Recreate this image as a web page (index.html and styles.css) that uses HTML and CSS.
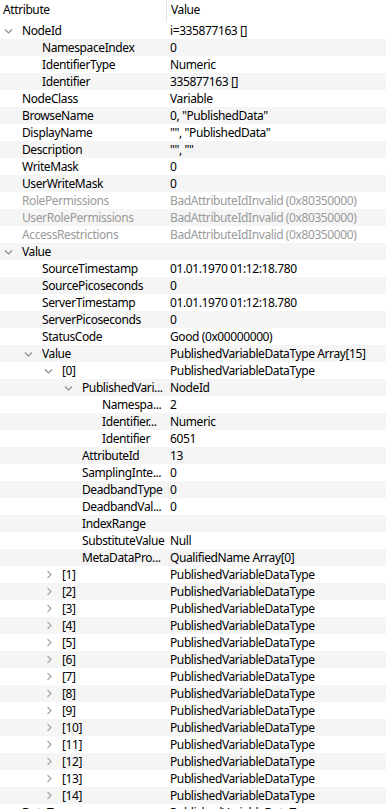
FILE: index.html
```html
<!DOCTYPE html>
<html lang="en">
<head>
  <meta charset="UTF-8" />
  <meta name="viewport" content="width=device-width, initial-scale=1" />
  <title>Attributes</title>
  <link rel="stylesheet" href="styles.css">
</head>
<body>
  <div class="attr-view">
    <div class="head">
      <div class="col-name">Attribute</div>
      <div class="col-value">Value</div>
    </div>
    <div id="rows"></div>
  </div>

  <script>
    // [level, toggle ('open' | 'closed' | ''), name, value, disabled]
    const rows = [
      [0, 'open', 'NodeId', 'i=335877163 []'],
      [1, '', 'NamespaceIndex', '0'],
      [1, '', 'IdentifierType', 'Numeric'],
      [1, '', 'Identifier', '335877163 []'],
      [0, '', 'NodeClass', 'Variable'],
      [0, '', 'BrowseName', '0, "PublishedData"'],
      [0, '', 'DisplayName', '"", "PublishedData"'],
      [0, '', 'Description', '"", ""'],
      [0, '', 'WriteMask', '0'],
      [0, '', 'UserWriteMask', '0'],
      [0, '', 'RolePermissions', 'BadAttributeIdInvalid (0x80350000)', true],
      [0, '', 'UserRolePermissions', 'BadAttributeIdInvalid (0x80350000)', true],
      [0, '', 'AccessRestrictions', 'BadAttributeIdInvalid (0x80350000)', true],
      [0, 'open', 'Value', ''],
      [1, '', 'SourceTimestamp', '01.01.1970 01:12:18.780'],
      [1, '', 'SourcePicoseconds', '0'],
      [1, '', 'ServerTimestamp', '01.01.1970 01:12:18.780'],
      [1, '', 'ServerPicoseconds', '0'],
      [1, '', 'StatusCode', 'Good (0x00000000)'],
      [1, 'open', 'Value', 'PublishedVariableDataType Array[15]'],
      [2, 'open', '[0]', 'PublishedVariableDataType'],
      [3, 'open', 'PublishedVari...', 'NodeId'],
      [4, '', 'Namespa...', '2'],
      [4, '', 'Identifier...', 'Numeric'],
      [4, '', 'Identifier', '6051'],
      [3, '', 'AttributeId', '13'],
      [3, '', 'SamplingInte...', '0'],
      [3, '', 'DeadbandType', '0'],
      [3, '', 'DeadbandVal...', '0'],
      [3, '', 'IndexRange', ''],
      [3, '', 'SubstituteValue', 'Null'],
      [3, '', 'MetaDataPro...', 'QualifiedName Array[0]']
    ];
    for (let i = 1; i <= 14; i++) {
      rows.push([2, 'closed', '[' + i + ']', 'PublishedVariableDataType']);
    }
    rows.push([0, '', 'DataType', 'PublishedVariableDataType']);

    const down = '<svg width="9" height="6" viewBox="0 0 9 6"><path d="M1 1.5 L4.5 5 L8 1.5" fill="none" stroke="#8c8c8c" stroke-width="1.2"/></svg>';
    const right = '<svg width="6" height="9" viewBox="0 0 6 9"><path d="M1.5 1 L5 4.5 L1.5 8" fill="none" stroke="#a6a6a6" stroke-width="1.2"/></svg>';

    const list = document.getElementById('rows');
    rows.forEach(([level, toggle, name, value, disabled]) => {
      const row = document.createElement('div');
      row.className = 'row' + (disabled ? ' disabled' : '');
      const icon = toggle === 'open' ? down : toggle === 'closed' ? right : '';
      row.innerHTML = `
        <div class="col-name lv${level}">
          <span class="toggle">${icon}</span>
          <span class="label">${name}</span>
        </div>
        <div class="col-value">${value}</div>
      `;
      list.appendChild(row);
    });
  </script>
</body>
</html>
```

FILE: styles.css
```css
body {
  margin: 0;
  font-family: "Noto Sans", sans-serif;
  font-size: 12px;
  letter-spacing: -0.4px;
  color: #000;
  background: #fff;
  overflow: hidden;
}
.attr-view {
  width: 386px;
}
.head {
  display: flex;
  height: 22px;
  line-height: 20px;
}
.head .col-name {
  width: 163px;
  padding-left: 3px;
  border-right: 1px solid #e5e5e5;
}
.head .col-value {
  padding-left: 4px;
}
.row {
  display: flex;
  height: 17px;
  line-height: 17px;
  white-space: nowrap;
}
.row:nth-child(even) {
  background: #f5f5f5;
}
.row .col-name {
  display: flex;
  width: 166px;
  box-sizing: border-box;
  padding-right: 2px;
}
.row .col-value {
  padding-left: 4px;
  flex: 1;
}
.toggle {
  flex: none;
  width: 17px;
  height: 17px;
  display: flex;
  align-items: center;
  justify-content: center;
}
.label {
  margin-left: 5px;
}
.lv1 { padding-left: 20px; }
.lv2 { padding-left: 40px; }
.lv3 { padding-left: 60px; }
.lv4 { padding-left: 80px; }
.disabled {
  color: #9a9a9a;
}
```
